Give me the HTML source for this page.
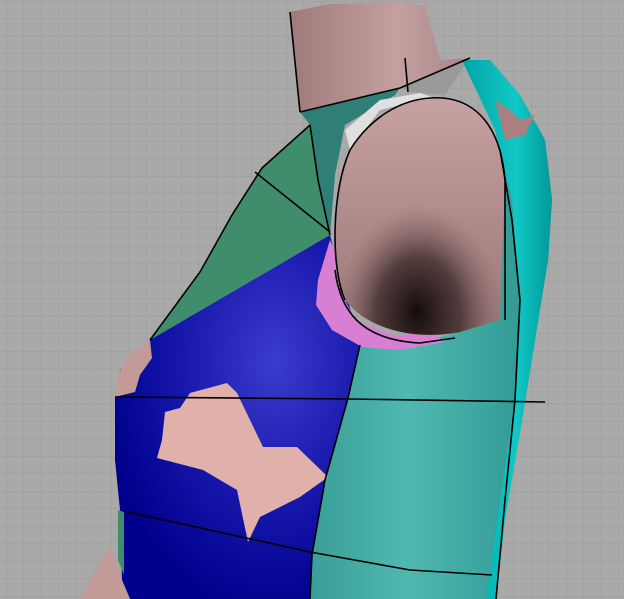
<!DOCTYPE html>
<html><head><meta charset="utf-8"><style>
html,body{margin:0;padding:0;width:624px;height:599px;overflow:hidden;background:#a9a9a9}
</style></head><body>
<svg width="624" height="599" viewBox="0 0 624 599" xmlns="http://www.w3.org/2000/svg">
<defs>
<pattern id="g" width="17.5" height="17.5" patternUnits="userSpaceOnUse" x="6" y="1">
<rect width="17.5" height="17.5" fill="#a9a9a9"/>
<path d="M0 0H17.5M0 0V17.5" stroke="#9c9c9c" stroke-width="1.2"/>
</pattern>
<radialGradient id="blue" cx="0.65" cy="0.35" r="0.7">
<stop offset="0" stop-color="#3a3ccc"/><stop offset="0.6" stop-color="#1414a8"/><stop offset="1" stop-color="#00008c"/>
</radialGradient>
<linearGradient id="teal" x1="0" x2="1" y1="0" y2="0">
<stop offset="0" stop-color="#3a9e98"/><stop offset="0.4" stop-color="#4fb8b0"/><stop offset="0.75" stop-color="#3aa39d"/><stop offset="1" stop-color="#2c8e88"/>
</linearGradient>
<linearGradient id="tealR" x1="0" x2="1">
<stop offset="0" stop-color="#00a5a5"/><stop offset="0.6" stop-color="#11c8c6"/><stop offset="1" stop-color="#009898"/>
</linearGradient>
<linearGradient id="neck" x1="0" x2="1">
<stop offset="0" stop-color="#9e7a7a"/><stop offset="0.6" stop-color="#c4a0a0"/><stop offset="1" stop-color="#a88585"/>
</linearGradient>
<radialGradient id="armdark" cx="0.5" cy="0.95" r="0.5" fx="0.48" fy="0.9">
<stop offset="0" stop-color="#150c0c"/><stop offset="0.5" stop-color="#4a3434" stop-opacity="0.9"/><stop offset="1" stop-color="#8a6a6a" stop-opacity="0"/>
</radialGradient>
<linearGradient id="arm" x1="0" x2="0" y1="0" y2="1">
<stop offset="0" stop-color="#c8a2a2"/><stop offset="0.5" stop-color="#b08b8b"/><stop offset="1" stop-color="#9a7878"/>
</linearGradient>
</defs>
<rect width="624" height="599" fill="url(#g)"/>
<path d="M290 12 L330 4 L400 2 L425 6 L440 60 L470 58 L400 88 L300 112 Z" fill="url(#neck)"/>
<path d="M400 88 L470 58 L445 95 L410 92 Z" fill="#9a9a9a"/>
<path d="M462 60 L490 60 L520 95 L545 140 L552 200 L548 260 L535 340 L522 420 L505 520 L496 599 L310 599 L312 555 L325 480 L348 398 L360 345 L430 340 L500 320 L500 140 Z" fill="url(#teal)"/>
<path d="M462 60 L490 60 L520 95 L545 140 L552 200 L548 260 L535 340 L522 420 L505 520 L496 599 L486 599 L500 500 L515 400 L520 300 L512 200 L495 130 Z" fill="url(#tealR)"/>
<path d="M495 100 L510 110 L520 120 L535 115 L525 135 L505 140 Z" fill="#a88080"/>
<path d="M310 125 L262 168 L232 215 L200 272 L150 340 L330 235 L318 180 Z" fill="#3f8d6a"/>
<path d="M300 112 L400 88 L395 95 L345 125 L335 175 L330 235 L318 180 L310 125 Z" fill="#2f7f78"/>
<path d="M330 235 L360 345 L348 398 L325 480 L312 555 L310 599 L130 599 L122 580 L120 510 L115 460 L115 397 L120 370 L150 340 Z" fill="url(#blue)"/>
<path d="M150 340 L128 355 L118 375 L115 397 L135 392 L140 375 L152 358 Z" fill="#c29a98"/>
<path d="M80 599 L110 545 L122 580 L130 599 Z" fill="#c29a98"/>
<path d="M118 510 L124 512 L124 575 L118 560 Z" fill="#3f8d6a"/>
<path d="M165 412 L180 408 L190 393 L227 383 L237 393 L263 447 L297 447 L328 477 L300 497 L260 517 L248 542 L237 490 L203 470 L157 458 L162 440 Z" fill="#e0b0ab"/>
<path d="M330 240 L318 280 L316 305 L332 330 L362 347 L400 350 L445 342 L430 332 L395 336 L355 320 L340 290 L335 250 Z" fill="#d77fd2"/>
<path d="M345 130 L380 100 L420 93 L455 105 L420 100 L380 110 L350 150 Z" fill="#e0e0e0"/>
<g>
<path id="armp" d="M430 98 C470 95 500 120 505 180 L500 320 L460 332 C420 340 370 332 345 300 C330 265 332 190 350 150 C370 118 400 100 430 98 Z" fill="url(#arm)"/>
<path d="M430 98 C470 95 500 120 505 180 L500 320 L460 332 C420 340 370 332 345 300 C330 265 332 190 350 150 C370 118 400 100 430 98 Z" fill="url(#armdark)"/>
</g>
<g stroke="#000" fill="none" stroke-width="1.6">
<path d="M115 397 L350 399 L545 402"/>
<path d="M123 511 L310 552 L410 570 L492 575"/>
<path d="M360 345 L348 398 L325 480 L312 555 L310 599"/>
<path d="M150 340 L200 272 L232 215 L262 168 L310 125"/>
<path d="M255 172 L330 232"/>
<path d="M300 112 L400 88 L470 58"/>
<path d="M405 58 L408 92"/>
<path d="M430 98 C470 95 500 120 505 180 L505 320 M345 300 C330 265 332 190 350 150 C370 118 400 100 430 98"/>
<path d="M335 270 C340 310 360 340 420 343 L455 338"/>
<path d="M310 125 L318 180 L330 235"/>
<path d="M500 150 L512 220 L520 300 L515 400 L505 500 L496 599"/>
<path d="M290 12 L300 112"/>
</g>
</svg>
</body></html>
